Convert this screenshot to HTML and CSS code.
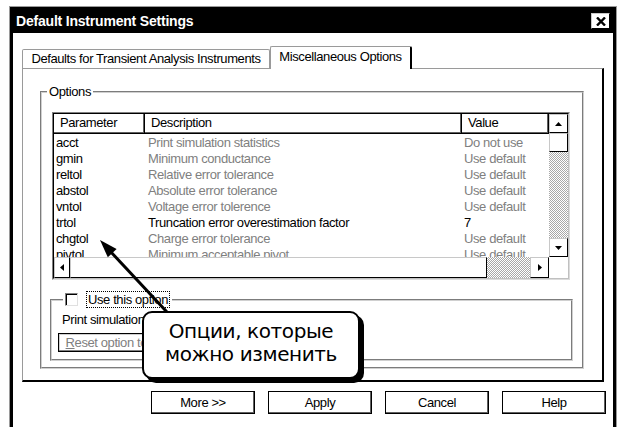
FILE: index.html
```html
<!DOCTYPE html>
<html lang="ru">
<head>
    <meta charset="UTF-8">
    <meta name="viewport" content="width=device-width, initial-scale=1.0">
    <title>Default Instrument Settings</title>
    <link rel="stylesheet" href="styles.css">
</head>
<body>
    <div class="window">
        <div class="frame">
            <div class="titlebar">
                <span class="title">Default Instrument Settings</span>
                <span class="close">
                    <svg width="10" height="9" viewBox="0 0 10 9"><path d="M1 0.5 L9 8.5 M9 0.5 L1 8.5" stroke="#000" stroke-width="2.4"/></svg>
                </span>
            </div>
            <div class="client">
                <div class="tabs">
                    <div class="tab tab-first">Defaults for Transient Analysis Instruments</div>
                    <div class="tab tab-active">Miscellaneous Options</div>
                </div>
                <div class="panel">
                    <fieldset class="group group-options">
                        <legend>Options</legend>
                        <div class="listview">
                            <div class="lv-inner">
                                <div class="lv-body">
                                    <div class="lv-row lv-head">
                                        <span>Parameter</span>
                                        <span>Description</span>
                                        <span>Value</span>
                                    </div>
                                    <div class="lv-row"><span>acct</span><span class="dim">Print simulation statistics</span><span class="dim">Do not use</span></div>
                                    <div class="lv-row"><span>gmin</span><span class="dim">Minimum conductance</span><span class="dim">Use default</span></div>
                                    <div class="lv-row"><span>reltol</span><span class="dim">Relative error tolerance</span><span class="dim">Use default</span></div>
                                    <div class="lv-row"><span>abstol</span><span class="dim">Absolute error tolerance</span><span class="dim">Use default</span></div>
                                    <div class="lv-row"><span>vntol</span><span class="dim">Voltage error tolerence</span><span class="dim">Use default</span></div>
                                    <div class="lv-row"><span>trtol</span><span>Truncation error overestimation factor</span><span>7</span></div>
                                    <div class="lv-row"><span>chgtol</span><span class="dim">Charge error tolerance</span><span class="dim">Use default</span></div>
                                    <div class="lv-row"><span>pivtol</span><span class="dim">Minimum acceptable pivot</span><span class="dim">Use default</span></div>
                                </div>
                                <div class="vscroll">
                                    <div class="sb-btn"><svg width="7" height="4" viewBox="0 0 7 4"><path d="M3.5 0 L7 4 L0 4 Z"/></svg></div>
                                    <div class="sb-thumb sb-thumb-v"></div>
                                    <div class="sb-track"></div>
                                    <div class="sb-btn"><svg width="7" height="4" viewBox="0 0 7 4"><path d="M0 0 L7 0 L3.5 4 Z"/></svg></div>
                                </div>
                                <div class="hscroll">
                                    <div class="sb-btn sb-btn-left"><svg width="4" height="7" viewBox="0 0 4 7"><path d="M4 0 L4 7 L0 3.5 Z"/></svg></div>
                                    <div class="sb-thumb sb-thumb-h"></div>
                                    <div class="sb-track"></div>
                                    <div class="sb-btn sb-btn-right"><svg width="4" height="7" viewBox="0 0 4 7"><path d="M0 0 L4 3.5 L0 7 Z"/></svg></div>
                                </div>
                                <div class="corner"></div>
                            </div>
                        </div>
                        <fieldset class="group group-option">
                            <legend><span class="checkbox"></span><span class="focus">Use this option</span></legend>
                            <div class="opt-desc">Print simulation statistics</div>
                            <button class="reset"><u>R</u>eset option to default</button>
                        </fieldset>
                    </fieldset>
                </div>
                <div class="buttons">
                    <button class="btn">More &gt;&gt;</button>
                    <button class="btn">Apply</button>
                    <button class="btn">Cancel</button>
                    <button class="btn">Help</button>
                </div>
            </div>
        </div>
    </div>

    <svg class="arrow" width="619" height="427" viewBox="0 0 619 427">
        <line x1="110" y1="251" x2="180" y2="326" stroke="#000" stroke-width="3"/>
        <polygon points="100,240 107.8,257.3 116.6,249.1" fill="#000"/>
    </svg>
    <div class="callout">Опции, которые<br>можно изменить</div>
</body>
</html>
```

FILE: styles.css
```css
body {
    margin: 0;
    width: 619px;
    height: 427px;
    overflow: hidden;
    position: relative;
    background-color: #fff;
    color: #000;
    font-family: "Liberation Sans", Arial, sans-serif;
    font-size: 13px;
    letter-spacing: -0.4px;
}

/* window frame */
.window {
    margin: 6px 0 0 9px;
    width: 606px;
    border: 1px solid #9a9a9a;
    border-bottom: none;
}
.frame {
    height: 430px;
    border: 3px solid #000;
    border-top-width: 2px;
    border-bottom: none;
}
.titlebar {
    height: 24px;
    padding: 0 3px;
    background-color: #000;
    display: flex;
    align-items: center;
    justify-content: space-between;
}
.title {
    color: #fff;
    font-weight: bold;
    font-size: 14px;
    letter-spacing: -0.2px;
}
.close {
    width: 19px;
    height: 16px;
    box-sizing: border-box;
    background-color: #fff;
    border: 1px solid #c8c8c8;
    border-right-color: #000;
    border-bottom-color: #000;
    display: flex;
    align-items: center;
    justify-content: center;
}
.client {
    padding: 13px 9px 0;
}

/* tabs */
.tabs {
    display: flex;
    align-items: flex-end;
    height: 22px;
}
.tab {
    box-sizing: border-box;
    height: 19px;
    line-height: 18px;
    text-align: center;
    background-color: #fff;
    border: 1px solid #9a9a9a;
    border-bottom: none;
    border-radius: 2px 2px 0 0;
}
.tab-first {
    width: 248px;
}
.tab-active {
    width: 142px;
    height: 23px;
    line-height: 20px;
    margin-bottom: -1px;
    border-right: 2px solid #000;
    position: relative;
}
.panel {
    border-top: 1px solid #9a9a9a;
    border-left: 1px solid #9a9a9a;
    border-right: 2px solid #000;
    border-bottom: 2px solid #000;
    padding: 16px 18px 11px 17px;
}

/* group boxes */
.group {
    margin: 0;
    min-width: 0;
    border: 2px groove #d0d0d0;
}
.group legend {
    line-height: 14px;
    padding: 0 2px;
}
.group-options {
    padding: 13px 9px 6px 8px;
}
.group-options > legend {
    margin-left: -3px;
}

/* list view */
.listview {
    margin: 0 3px 0 2px;
    border: 1px solid;
    border-color: #808080 #dcdcdc #dcdcdc #808080;
}
.lv-inner {
    display: grid;
    grid-template-columns: 495px 19px;
    grid-template-rows: 143px 21px;
    border: 1px solid;
    border-color: #000 #c0c0c0 #c0c0c0 #000;
    background-color: #fff;
}
.lv-body {
    overflow: hidden;
}
.lv-row {
    display: grid;
    grid-template-columns: 91px 317px 87px;
    height: 16px;
    line-height: 17px;
    white-space: nowrap;
}
.lv-row span {
    padding-left: 2px;
    overflow: hidden;
}
.lv-row span:nth-child(2) {
    padding-left: 3px;
}
.lv-row .dim {
    color: #808080;
}
.lv-head {
    height: 20px;
}
.lv-head span,
.lv-head span:nth-child(2) {
    box-sizing: border-box;
    padding-left: 6px;
    line-height: 18px;
    border-right: 1px solid #000;
    border-bottom: 1px solid #000;
    box-shadow: inset -1px -1px 0 #606060;
}

/* scroll bars */
.vscroll,
.hscroll {
    display: flex;
}
.vscroll {
    flex-direction: column;
}
.sb-btn,
.sb-thumb {
    box-sizing: border-box;
    flex: none;
    background-color: #fff;
    border: 1px solid #c8c8c8;
    border-right-color: #000;
    border-bottom-color: #000;
}
.sb-btn {
    width: 19px;
    height: 19px;
    display: flex;
    align-items: center;
    justify-content: center;
}
.sb-btn-left {
    width: 16px;
    height: 21px;
}
.sb-btn-right {
    height: 21px;
}
.sb-thumb-v {
    height: 19px;
}
.sb-thumb-h {
    width: 417px;
}
.sb-track {
    flex: 1;
    background-image: repeating-conic-gradient(#a8a8a8 0 25%, #fff 0 50%);
    background-size: 2px 2px;
}
.corner {
    background-color: #fff;
}

/* option details */
.group-option {
    margin-top: 11px;
    padding: 4px 10px 7px;
}
.group-option > legend {
    display: flex;
    align-items: center;
    margin-left: 1px;
    line-height: 15px;
}
.checkbox {
    width: 13px;
    height: 13px;
    box-sizing: border-box;
    border: 1px solid;
    border-color: #808080 #e0e0e0 #e0e0e0 #808080;
    box-shadow: inset 1px 1px 0 #000;
    background-color: #fff;
    margin-right: 8px;
}
.focus {
    border: 1px dotted #000;
    padding: 0 1px;
}
.opt-desc {
    line-height: 16px;
}
.reset {
    display: block;
    margin: 5px 0 0 -4px;
    width: 136px;
    height: 19px;
    padding: 0;
    background-color: #fff;
    color: #808080;
    font: inherit;
    letter-spacing: inherit;
    border: 1px solid #000;
    box-shadow: inset -1px -1px 0 #808080, inset 1px 1px 0 #d0d0d0;
}

/* dialog buttons */
.buttons {
    display: flex;
    justify-content: flex-end;
    gap: 13px;
    margin: 9px -2px 0 0;
}
.btn {
    width: 104px;
    height: 23px;
    padding: 0;
    background-color: #fff;
    color: #000;
    font: inherit;
    letter-spacing: inherit;
    border: 1px solid #000;
    box-shadow: inset -1px -1px 0 #606060;
}

/* annotation */
.arrow {
    position: absolute;
    left: 0;
    top: 0;
    pointer-events: none;
}
.callout {
    position: absolute;
    left: 142px;
    top: 311px;
    width: 218px;
    height: 68px;
    box-sizing: border-box;
    padding-bottom: 4px;
    border: 2px solid #000;
    border-radius: 10px;
    background-color: #fff;
    box-shadow: 4px 4px 0 #000;
    font-family: "DejaVu Sans", Verdana, sans-serif;
    font-size: 20px;
    letter-spacing: -0.4px;
    line-height: 23px;
    text-align: center;
    display: flex;
    align-items: center;
    justify-content: center;
}
```
